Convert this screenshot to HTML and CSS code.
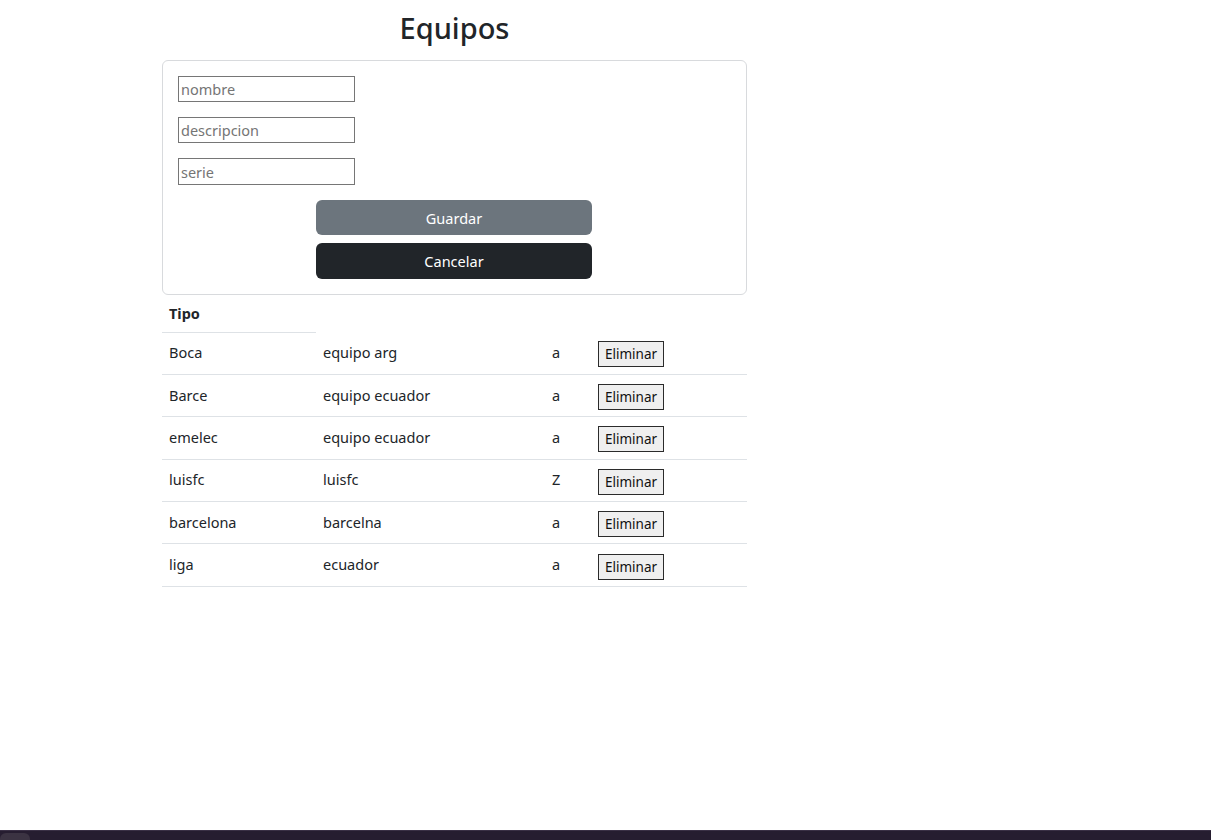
FILE: index.html
```html
<!DOCTYPE html>
<html lang="es">
<head>
<meta charset="utf-8">
<title>Equipos</title>
<link rel="stylesheet" href="styles.css">
</head>
<body>
<div class="page">
  <main class="main">
    <div class="column">
      <h2 class="title">Equipos</h2>
      <div class="card">
        <form class="card-body">
          <div class="field"><input class="input" type="text" placeholder="nombre"></div>
          <div class="field"><input class="input" type="text" placeholder="descripcion"></div>
          <div class="field last"><input class="input" type="text" placeholder="serie"></div>
          <div class="actions">
            <button type="button" class="btn btn-secondary">Guardar</button>
            <button type="button" class="btn btn-dark">Cancelar</button>
          </div>
        </form>
      </div>
      <table class="table">
        <thead>
          <tr><th class="th">Tipo</th></tr>
        </thead>
        <tbody>
          <tr><td class="c1">Boca</td><td class="c2">equipo arg</td><td class="c3">a</td><td class="c4"><button class="del">Eliminar</button></td></tr>
          <tr><td class="c1">Barce</td><td class="c2">equipo ecuador</td><td class="c3">a</td><td class="c4"><button class="del">Eliminar</button></td></tr>
          <tr><td class="c1">emelec</td><td class="c2">equipo ecuador</td><td class="c3">a</td><td class="c4"><button class="del">Eliminar</button></td></tr>
          <tr><td class="c1">luisfc</td><td class="c2">luisfc</td><td class="c3">Z</td><td class="c4"><button class="del">Eliminar</button></td></tr>
          <tr><td class="c1">barcelona</td><td class="c2">barcelna</td><td class="c3">a</td><td class="c4"><button class="del">Eliminar</button></td></tr>
          <tr><td class="c1">liga</td><td class="c2">ecuador</td><td class="c3">a</td><td class="c4"><button class="del">Eliminar</button></td></tr>
        </tbody>
      </table>
    </div>
  </main>
  <div class="bottombar"><div class="bottomtab"></div></div>
</div>
</body>
</html>
```
FILE: styles.css
```css
* { box-sizing: border-box; }
html, body { margin: 0; padding: 0; }
body {
  font-family: "Segoe UI", "Noto Sans", "Open Sans", sans-serif;
  font-size: 14.5px;
  line-height: 1.5;
  color: #212529;
  background: #fff;
}
.page {
  height: 840px;
  display: flex;
  flex-direction: column;
}
.main {
  flex: 1;
  padding-left: 162px;
}
.column {
  width: 585px;
}
.title {
  margin: 8px 0 12px;
  height: 40px;
  font-size: 29px;
  font-weight: 500;
  line-height: 40px;
  text-align: center;
}
.card {
  border: 1px solid #d8dadd;
  border-radius: 6px;
  height: 235px;
}
.card-body {
  margin: 0;
  padding: 15px 16px 15px 15px;
}
.field {
  height: 26px;
  margin-bottom: 15px;
}
.field.last { height: 27px; margin-bottom: 15px; }
.input {
  display: block;
  width: 177px;
  height: 26px;
  margin: 0;
  padding: 0 2px;
  border: 1px solid #767676;
  border-radius: 0;
  font-family: inherit;
  font-size: 14.5px;
  color: #212529;
  background: #fff;
}
.field.last .input { height: 27px; }
.input::placeholder { color: #757575; }
.actions {
  display: flex;
  flex-direction: column;
  align-items: center;
  gap: 8px;
}
.btn {
  width: 276px;
  height: 35px;
  border: none;
  border-radius: 6px;
  color: #fff;
  font-family: inherit;
  font-size: 14.5px;
  padding: 0;
}
.btn-secondary { background: #6c757d; }
.btn-dark { background: #212529; height: 36px; }
.table {
  width: 585px;
  border-collapse: collapse;
  margin-top: 0;
}
.th {
  text-align: left;
  font-weight: 700;
  width: 154px;
  height: 37px;
  padding: 2px 7px 0;
  border-bottom: 1px solid #dee2e6;
}
td {
  height: 42.4px;
  padding: 0 7px;
  border-bottom: 1px solid #dee2e6;
  vertical-align: middle;
}
.c1 { width: 154px; }
.c2 { width: 229px; }
.c3 { width: 45px; }
.c4 { width: 157px; padding-left: 8px; }
.del {
  height: 26px;
  padding: 0 6px;
  margin-top: 3px;
  border: 1px solid #2b2b2b;
  border-radius: 0;
  background: #efefef;
  font-family: inherit;
  font-size: 13.5px;
  color: #111;
}
.bottombar {
  height: 10px;
  background: #261d30;
  border-top: 1px solid #3a3045;
}
.bottomtab {
  width: 30px;
  height: 9px;
  margin-top: 2px;
  background: #3b3342;
  border-radius: 6px 6px 0 0;
}
```
